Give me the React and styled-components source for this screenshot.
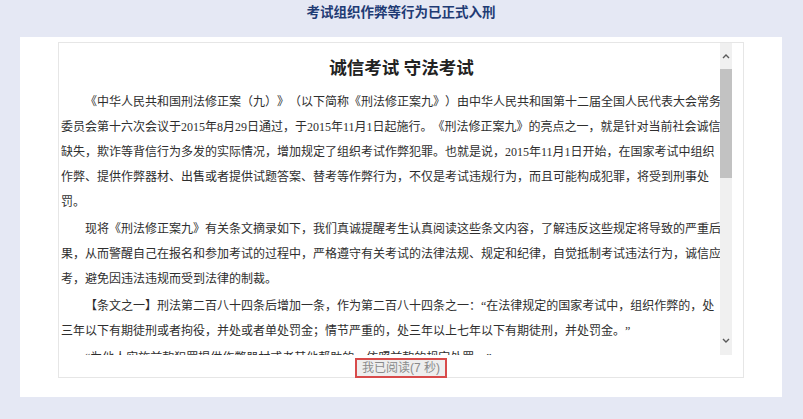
import React from 'react';
import styled, { createGlobalStyle } from 'styled-components';

const GlobalStyle = createGlobalStyle`
	html, body {
		margin: 0;
		padding: 0;
		background: #e5e8f4;
	}
	* {
		box-sizing: border-box;
	}
`;

const paragraphs = [
	[
		'《中华人民共和国刑法修正案（九）》（以下简称《刑法修正案九》）由中华人民共和国第十二届全国人民代表大会常务',
		'委员会第十六次会议于2015年8月29日通过，于2015年11月1日起施行。《刑法修正案九》的亮点之一，就是针对当前社会诚信',
		'缺失，欺诈等背信行为多发的实际情况，增加规定了组织考试作弊犯罪。也就是说，2015年11月1日开始，在国家考试中组织',
		'作弊、提供作弊器材、出售或者提供试题答案、替考等作弊行为，不仅是考试违规行为，而且可能构成犯罪，将受到刑事处',
		'罚。',
	],
	[
		'现将《刑法修正案九》有关条文摘录如下，我们真诚提醒考生认真阅读这些条文内容，了解违反这些规定将导致的严重后',
		'果，从而警醒自己在报名和参加考试的过程中，严格遵守有关考试的法律法规、规定和纪律，自觉抵制考试违法行为，诚信应',
		'考，避免因违法违规而受到法律的制裁。',
	],
	[
		'【条文之一】刑法第二百八十四条后增加一条，作为第二百八十四条之一：“在法律规定的国家考试中，组织作弊的，处',
		'三年以下有期徒刑或者拘役，并处或者单处罚金；情节严重的，处三年以上七年以下有期徒刑，并处罚金。”',
	],
	['“为他人实施前款犯罪提供作弊器材或者其他帮助的，依照前款的规定处罚。”'],
];

const Chevron = ({ down }) => (
	<svg width='8' height='5' viewBox='0 0 8 5'>
		<polyline
			points={down ? '1,1 4,4 7,1' : '1,4 4,1 7,4'}
			fill='none'
			stroke='#5a5a5a'
			strokeWidth='1.4'
		/>
	</svg>
);

const App = () => {
	return (
		<>
			<GlobalStyle />
			<Page>
				<Title>考试组织作弊等行为已正式入刑</Title>
				<Panel>
					<ReadBox>
						<ScrollRow>
							<Content>
								<Heading>诚信考试 守法考试</Heading>
								{paragraphs.map((lines, i) => (
									<Para key={i}>
										{lines.map((line, j) => (
											<Line key={j} $indent={j === 0}>
												{line}
											</Line>
										))}
									</Para>
								))}
							</Content>
							<ScrollBar>
								<ArrowBtn $h={26}>
									<Chevron />
								</ArrowBtn>
								<Thumb />
								<Track />
								<ArrowBtn $h={30}>
									<Chevron down />
								</ArrowBtn>
							</ScrollBar>
						</ScrollRow>
						<Footer>
							<ReadButton>我已阅读(7 秒)</ReadButton>
						</Footer>
					</ReadBox>
				</Panel>
			</Page>
		</>
	);
};

const Page = styled.div`
	width: 803px;
	height: 419px;
	padding: 0 21px 0 20px;
	overflow: hidden;
`;

const Title = styled.div`
	height: 37px;
	line-height: 25px;
	text-align: center;
	font-family: 'Liberation Serif', 'Noto Sans CJK SC', serif;
	font-size: 13.5px;
	font-weight: 700;
	color: #1f3b74;
`;

const Panel = styled.div`
	height: 360px;
	background: #ffffff;
	padding: 5px 38px 0 38px;
`;

const ReadBox = styled.div`
	height: 336px;
	border: 1px solid #e6e6e6;
	display: flex;
	flex-direction: column;
`;

const ScrollRow = styled.div`
	display: flex;
	height: 312px;
	padding-right: 11px;
`;

const Content = styled.div`
	flex: 1;
	overflow: hidden;
	padding: 12px 0 0 2px;
	font-family: 'Liberation Serif', 'Noto Sans CJK SC', serif;
	font-size: 12px;
	color: #2e2e2e;
	text-spacing-trim: space-all;
`;

const Heading = styled.h1`
	margin: 0 0 8.5px;
	padding-left: 22px;
	text-align: center;
	font-family: 'Liberation Serif', 'Noto Sans CJK SC', serif;
	font-size: 17.5px;
	line-height: 26px;
	font-weight: 700;
	color: #222222;
`;

const Para = styled.p`
	margin: 0 0 2px;
	line-height: 25px;
`;

const Line = styled.span`
	display: block;
	white-space: nowrap;
	padding-left: ${(p) => (p.$indent ? '24px' : '0')};
`;

const ScrollBar = styled.div`
	width: 12px;
	background: #f0f0f0;
	display: flex;
	flex-direction: column;
`;

const ArrowBtn = styled.div`
	height: ${(p) => p.$h}px;
	display: flex;
	align-items: center;
	justify-content: center;
`;

const Thumb = styled.div`
	height: 109px;
	background: #c2c2c2;
`;

const Track = styled.div`
	flex: 1;
`;

const Footer = styled.div`
	flex: 1;
	display: flex;
	justify-content: center;
	align-items: flex-start;
	padding-top: 3px;
`;

const ReadButton = styled.div`
	padding: 0 5px;
	height: 20px;
	border: 2px solid #d84b4b;
	background: #eeeeee;
	color: #8a8a8a;
	font-family: 'Liberation Sans', 'Noto Sans CJK SC', sans-serif;
	font-size: 12px;
	line-height: 16px;
	text-align: center;
	white-space: nowrap;
`;

export default App;
